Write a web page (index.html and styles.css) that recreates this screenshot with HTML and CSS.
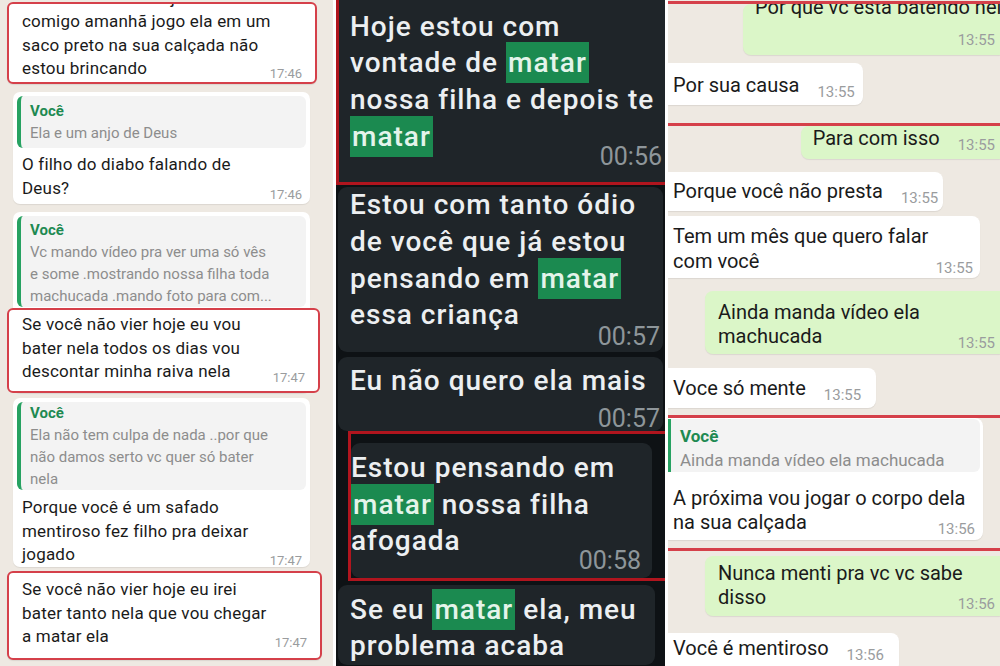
FILE: index.html
```html
<!DOCTYPE html>
<html lang="pt-BR">
<head>
    <meta charset="UTF-8">
    <meta name="viewport" content="width=device-width, initial-scale=1.0">
    <title>Conversas</title>
    <link rel="stylesheet" href="styles.css">
</head>
<body>
    <div class="colagem">

        <!-- Painel da esquerda -->
        <section class="painel painel-esq">
            <div class="balao marcado topo-esq">
                <p class="texto corte-esq">se você não vier hoje buscar ela<br>comigo amanhã jogo ela em um<br>saco preto na sua calçada não<br>estou brincando<span class="hora hora-esq b1-hora">17:46</span></p>
            </div>

            <div class="balao bal-esq esq-b">
                <div class="citacao cit-esq cit-b">
                    <div class="autor">Você</div>
                    <div class="trecho">Ela e um anjo de Deus</div>
                </div>
                <p class="texto corpo-esq">O filho do diabo falando de<br>Deus?<span class="hora hora-esq">17:46</span></p>
            </div>

            <div class="balao bal-esq esq-c">
                <div class="citacao cit-esq cit-c">
                    <div class="autor">Você</div>
                    <div class="trecho">Vc mando vídeo pra ver uma só vês<br>e some .mostrando nossa filha toda<br>machucada .mando foto para com...</div>
                </div>
                <div class="marcado marca-c">
                    <p class="texto">Se você não vier hoje eu vou<br>bater nela todos os dias vou<br>descontar minha raiva nela<span class="hora hora-esq">17:47</span></p>
                </div>
            </div>

            <div class="balao bal-esq esq-d">
                <div class="citacao cit-esq cit-d">
                    <div class="autor">Você</div>
                    <div class="trecho">Ela não tem culpa de nada ..por que<br>não damos serto vc quer só bater<br>nela</div>
                </div>
                <p class="texto corpo-esq corpo-d">Porque você é um safado<br>mentiroso fez filho pra deixar<br>jogado<span class="hora hora-esq">17:47</span></p>
            </div>

            <div class="balao marcado esq-e">
                <p class="texto">Se você não vier hoje eu irei<br>bater tanto nela que vou chegar<br>a matar ela<span class="hora hora-esq">17:47</span></p>
            </div>
        </section>

        <!-- Painel do meio (tema escuro) -->
        <section class="painel painel-meio">
            <div class="moldura moldura-1">
                <p class="texto-escuro">Hoje estou com<br>vontade de <span class="busca">matar</span><br>nossa filha e depois te<br><span class="busca">matar</span></p>
                <div class="hora-escura hora-1">00:56</div>
            </div>

            <div class="balao-escuro meio-b">
                <p class="texto-escuro">Estou com tanto ódio<br>de você que já estou<br>pensando em <span class="busca">matar</span><br>essa criança</p>
                <div class="hora-escura hora-2">00:57</div>
            </div>

            <div class="balao-escuro meio-c">
                <p class="texto-escuro">Eu não quero ela mais</p>
                <div class="hora-escura hora-3">00:57</div>
            </div>

            <div class="moldura moldura-2">
                <div class="balao-escuro meio-d">
                    <p class="texto-escuro">Estou pensando em<br><span class="busca">matar</span> nossa filha<br>afogada</p>
                    <div class="hora-escura hora-4">00:58</div>
                </div>
            </div>

            <div class="balao-escuro meio-e">
                <p class="texto-escuro">Se eu <span class="busca">matar</span> ela, meu<br>problema acaba</p>
            </div>
        </section>

        <!-- Painel da direita -->
        <section class="painel painel-dir">
            <div class="linha-vermelha linha-1"></div>
            <div class="balao saida dir-a">
                <p class="texto corte-dir">Por que vc esta batendo nela</p>
                <div class="hora-bloco">13:55</div>
            </div>

            <div class="balao entrada dir-b">
                <p class="texto">Por sua causa<span class="hora-linha">13:55</span></p>
            </div>

            <div class="linha-vermelha linha-2"></div>
            <div class="balao saida dir-c">
                <p class="texto">Para com isso<span class="hora-linha">13:55</span></p>
            </div>

            <div class="balao entrada dir-d">
                <p class="texto">Porque você não presta<span class="hora-linha">13:55</span></p>
            </div>

            <div class="balao entrada dir-e">
                <p class="texto">Tem um mês que quero falar<br>com você<span class="hora hora-dir">13:55</span></p>
            </div>

            <div class="balao saida dir-f">
                <p class="texto">Ainda manda vídeo ela<br>machucada<span class="hora hora-dir">13:55</span></p>
            </div>

            <div class="balao entrada dir-g">
                <p class="texto">Voce só mente<span class="hora-linha">13:55</span></p>
            </div>

            <div class="linha-vermelha linha-3"></div>
            <div class="balao entrada dir-h">
                <div class="citacao cit-dir">
                    <div class="autor">Você</div>
                    <div class="trecho">Ainda manda vídeo ela machucada</div>
                </div>
                <p class="texto corpo-dir">A próxima vou jogar o corpo dela<br>na sua calçada<span class="hora hora-dir">13:56</span></p>
            </div>

            <div class="linha-vermelha linha-4"></div>
            <div class="balao saida dir-i">
                <p class="texto">Nunca menti pra vc vc sabe<br>disso<span class="hora hora-dir">13:56</span></p>
            </div>

            <div class="balao entrada dir-j">
                <p class="texto">Você é mentiroso<span class="hora-linha">13:56</span></p>
            </div>
        </section>
    </div>
</body>
</html>
```

FILE: styles.css
```css
/* Cores */
:root {
    --fundo-claro: #eee9e2;
    --fundo-escuro: #0e1215;
    --balao-escuro: #1f2529;
    --verde-saida: #dbf6c8;
    --vermelho: #d5404a;
    --vermelho-escuro: #b0151e;
    --verde-citacao: #27a262;
    --texto: #1a1a1a;
    --hora: #9a9c9e;
}

* {
    box-sizing: border-box;
}

body {
    margin: 0;
    background: #ffffff;
    font-family: Roboto, "Noto Sans", sans-serif;
}

p {
    margin: 0;
}

.colagem {
    display: flex;
    gap: 3px;
    width: 1000px;
    height: 666px;
}

.painel {
    height: 666px;
    overflow: hidden;
}

.texto {
    white-space: nowrap;
    color: var(--texto);
}

.balao {
    background: #ffffff;
    border-radius: 7px;
    box-shadow: 0 1px 1px rgba(0, 0, 0, 0.08);
}

.marcado {
    border: 2px solid var(--vermelho);
    border-radius: 6px;
}

.hora {
    float: right;
    position: relative;
    color: var(--hora);
    letter-spacing: 0;
}

/* Citação (resposta) */
.citacao {
    background: #f3f3f3;
    border-left: 4px solid var(--verde-citacao);
    border-radius: 6px;
}

.citacao .autor {
    color: #1e8a52;
    font-weight: bold;
}

.citacao .trecho {
    color: #8d8d8d;
    white-space: nowrap;
}

/* ---------- Painel esquerdo ---------- */
.painel-esq {
    width: 333px;
    background: var(--fundo-claro);
    font-size: 17px;
    line-height: 23.5px;
}

.painel-esq .texto {
    letter-spacing: 0.2px;
}

.hora-esq {
    font-size: 13px;
    top: 6px;
    margin-left: 12px;
}

.b1-hora {
    top: 5px;
}

.topo-esq {
    margin: 2px 0 0 7px;
    width: 310px;
    height: 82px;
    padding: 0 13px;
    overflow: hidden;
}

.corte-esq {
    margin-top: -17.5px;
}

.bal-esq {
    margin-left: 13px;
    width: 297px;
    padding: 4px;
}

.cit-esq {
    padding: 0 8px 0 9px;
    font-size: 15px;
    line-height: 22px;
}

.corpo-esq {
    padding-left: 5px;
    padding-right: 4px;
}

.esq-b {
    margin-top: 8px;
}

.cit-b {
    padding-top: 4px;
    padding-bottom: 4px;
}

.esq-b .corpo-esq {
    margin-top: 5px;
}

.esq-c {
    margin-top: 8px;
    padding-bottom: 0;
}

.cit-c {
    padding-top: 3px;
}

.marca-c {
    margin: 1px -14px 0 -10px;
    padding: 3px 13px 7px 13px;
    background: #ffffff;
}

.esq-d {
    margin-top: 5.5px;
    padding-bottom: 0;
}

.corpo-d {
    margin-top: 6px;
}

.esq-e {
    margin: 4.5px 0 0 7px;
    width: 315px;
    padding: 5px 13px 9px 13px;
}

/* ---------- Painel do meio ---------- */
.painel-meio {
    width: 329px;
    background: var(--fundo-escuro);
}

.texto-escuro {
    white-space: nowrap;
    color: #eceff1;
    font-size: 28px;
    font-weight: 500;
    letter-spacing: 1px;
    line-height: 36.7px;
}

.busca {
    background: #1b8a50;
    color: #e4f4ea;
    padding: 4px 2px;
}

.hora-escura {
    text-align: right;
    color: #8e969a;
    font-size: 25px;
    line-height: 24px;
}

.moldura {
    border: 3px solid var(--vermelho-escuro);
}

.moldura-1 {
    margin: -5px -5px 0 0;
    width: 334px;
    background: var(--balao-escuro);
    padding: 10.5px 5px 13px 11px;
}

.hora-1 {
    margin-top: -10px;
}

.balao-escuro {
    background: var(--balao-escuro);
    border-radius: 9px;
}

.meio-b {
    margin: 2px 0 0 2px;
    width: 325px;
    padding: 0 3px 3px 12px;
}

.hora-2 {
    margin-top: -9px;
}

.meio-c {
    margin: 5px 0 0 2px;
    width: 325px;
    padding: 5.5px 3px 0 12px;
}

.hora-3 {
    margin-top: 8px;
}

.moldura-2 {
    margin-left: 12px;
    width: 322px;
    padding-top: 9px;
}

.meio-d {
    width: 301px;
    padding: 6.6px 11px 5px 0;
}

.hora-4 {
    margin-top: -11px;
}

.meio-e {
    margin: 4px 0 0 2px;
    width: 317px;
    padding: 6.6px 0 0 12px;
}

/* ---------- Painel direito ---------- */
.painel-dir {
    width: 332px;
    background: var(--fundo-claro);
    font-size: 20px;
    line-height: 24px;
}

.linha-vermelha {
    height: 3px;
    background: var(--vermelho);
}

.saida {
    background: var(--verde-saida);
    margin-left: auto;
    border-radius: 8px 0 0 8px;
}

.entrada {
    border-radius: 0 8px 8px 0;
    width: fit-content;
}

.hora-linha {
    font-size: 15px;
    color: var(--hora);
    margin-left: 18px;
    position: relative;
    top: 5px;
}

.hora-dir {
    font-size: 15px;
    top: 7px;
    margin-left: 12px;
}

.hora-bloco {
    text-align: right;
    font-size: 15px;
    line-height: 20px;
    color: var(--hora);
}

.linha-1 {
    margin-top: 1px;
}

.dir-a {
    width: 257px;
    height: 51px;
    overflow: hidden;
    padding: 0 5px 5px 12px;
}

.corte-dir {
    margin-top: -9px;
}

.dir-a .hora-bloco {
    margin-top: 11px;
}

.dir-b {
    margin-top: 8px;
    padding: 10px 8px 6px 5px;
}

.linha-2 {
    margin-top: 18px;
}

.dir-c {
    width: fit-content;
    padding: 0 5px 7px 12px;
}

.dir-d {
    margin-top: 13px;
    padding: 7px 5px 6px 5px;
}

.dir-e {
    margin-top: 5px;
    width: 312px;
    padding: 8px 7px 4px 5px;
    line-height: 25px;
}

.dir-f {
    margin-top: 13px;
    width: 295px;
    padding: 9px 5px 6px 13px;
}

.dir-g {
    margin-top: 14px;
    padding: 8px 15px 6px 5px;
}

.linha-3 {
    margin-top: 7px;
}

.dir-h {
    width: 315px;
    padding: 1px 3px 6px 0;
}

.cit-dir {
    border-left-width: 3px;
    border-radius: 0 6px 6px 0;
    padding: 5px 8px 0 9px;
    font-size: 17px;
    line-height: 24px;
}

.corpo-dir {
    margin-top: 14px;
    padding-left: 5px;
    padding-right: 5px;
}

.linha-4 {
    margin-top: 8px;
}

.dir-i {
    margin-top: 5px;
    width: 295px;
    padding: 5px 5px 7px 13px;
}

.dir-j {
    margin-top: 17px;
    padding: 3px 15px 10px 5px;
}
```
